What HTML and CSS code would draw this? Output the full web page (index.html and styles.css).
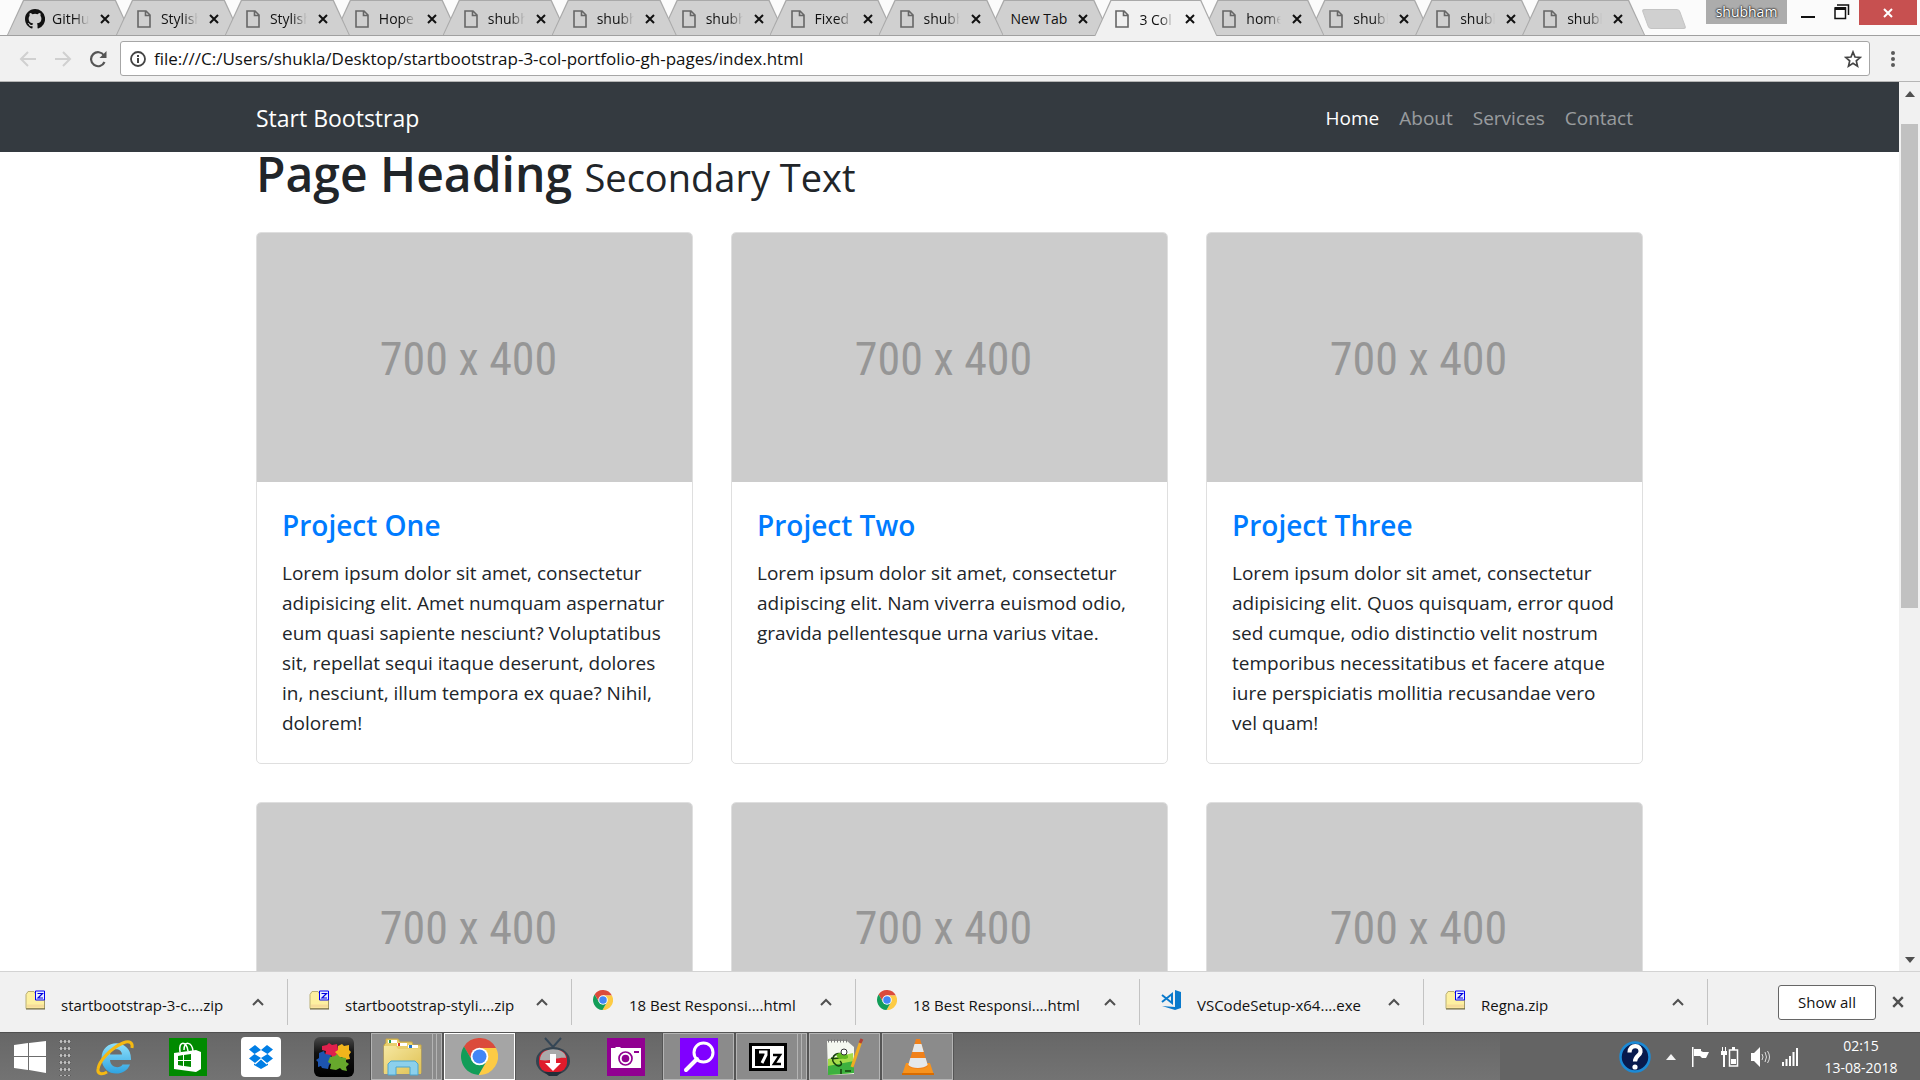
FILE: index.html
```html
<!DOCTYPE html>
<html lang="en">
<head>
<meta charset="utf-8">
<title>3 Col Portfolio</title>
<link rel="stylesheet" href="styles.css">
</head>
<body>
<svg class="sprite" aria-hidden="true">
  <symbol id="file" viewBox="0 0 14 18"><path d="M1 1h8l4 4v12H1zM8.500 1v4.500H13" fill="none" stroke="#666" stroke-width="1.600"/></symbol>
  <symbol id="x" viewBox="0 0 10 10"><path d="M1 1l8 8M9 1l-8 8" fill="none" stroke="currentColor" stroke-width="2"/></symbol>
  <symbol id="chevron" viewBox="0 0 12 8"><path d="M1 7l5-5 5 5" fill="none" stroke="#505050" stroke-width="2"/></symbol>
  <symbol id="zip" viewBox="0 0 20 19"><path d="M1 4l2-3h6l2 3h9v14H1z" fill="#fdf0a0" stroke="#b9ae74"/><path d="M2 14h17v3H2z" fill="#f6dc9a"/><path d="M1 18.500h19V8" fill="none" stroke="#6a6440"/><path d="M10.500 .5h9v9h-9z" fill="#e8eeff" stroke="#0000f0"/><path d="M12.500 3h5l-4.500 4.500h5" fill="none" stroke="#0000e0" stroke-width="1.200"/></symbol>
  <symbol id="chrome" viewBox="2 2 44 44"><path d="M5.540 12.030A22 22 0 0 1 43.600 14H24v10l-8.660 5z" fill="#db4b3c"/><path d="M43.600 14a22 22 0 0 1-20.740 31.970L32.660 29 24 24V14z" fill="#fdcb44"/><path d="M22.860 45.970A22 22 0 0 1 5.540 12.030L15.340 29 24 24l8.660 5z" fill="#129d58"/><circle cx="24" cy="24" r="10.500" fill="#fff"/><circle cx="24" cy="24" r="8.300" fill="#4286f5"/></symbol>
</svg>

<header class="browser">
  <div class="tabstrip">
    <ul class="tabs">
      <li class="tab"><svg class="favicon github" viewBox="0 0 16 16"><path fill="#111" d="M8 0C3.580 0 0 3.580 0 8c0 3.540 2.290 6.530 5.470 7.590.4.070.55-.17.55-.38v-1.490c-2.010.37-2.530-.49-2.690-.94-.09-.23-.48-.94-.82-1.130-.28-.15-.68-.52-.01-.53.63-.01 1.080.58 1.230.82.72 1.210 1.870.87 2.330.66.070-.52.28-.87.51-1.070-1.780-.2-3.640-.89-3.640-3.950 0-.87.310-1.590.82-2.150-.08-.2-.36-1.020.08-2.120 0 0 .67-.21 2.200.82a7.600 7.600 0 0 1 4 0c1.530-1.040 2.200-.82 2.200-.82.44 1.100.16 1.920.08 2.120.51.560.82 1.270.82 2.150 0 3.070-1.870 3.750-3.650 3.950.29.25.54.73.54 1.480v2.200c0 .21.15.46.55.38A8 8 0 0 0 8 0z"/></svg><span class="tab-title">GitHub</span><button class="tab-close" aria-label="Close tab"><svg><use href="#x"/></svg></button></li>
      <li class="tab"><svg class="favicon"><use href="#file"/></svg><span class="tab-title">Stylish</span><button class="tab-close" aria-label="Close tab"><svg><use href="#x"/></svg></button></li>
      <li class="tab"><svg class="favicon"><use href="#file"/></svg><span class="tab-title">Stylish</span><button class="tab-close" aria-label="Close tab"><svg><use href="#x"/></svg></button></li>
      <li class="tab"><svg class="favicon"><use href="#file"/></svg><span class="tab-title">Hope</span><button class="tab-close" aria-label="Close tab"><svg><use href="#x"/></svg></button></li>
      <li class="tab"><svg class="favicon"><use href="#file"/></svg><span class="tab-title">shubham</span><button class="tab-close" aria-label="Close tab"><svg><use href="#x"/></svg></button></li>
      <li class="tab"><svg class="favicon"><use href="#file"/></svg><span class="tab-title">shubham</span><button class="tab-close" aria-label="Close tab"><svg><use href="#x"/></svg></button></li>
      <li class="tab"><svg class="favicon"><use href="#file"/></svg><span class="tab-title">shubham</span><button class="tab-close" aria-label="Close tab"><svg><use href="#x"/></svg></button></li>
      <li class="tab"><svg class="favicon"><use href="#file"/></svg><span class="tab-title">Fixed</span><button class="tab-close" aria-label="Close tab"><svg><use href="#x"/></svg></button></li>
      <li class="tab"><svg class="favicon"><use href="#file"/></svg><span class="tab-title">shubham</span><button class="tab-close" aria-label="Close tab"><svg><use href="#x"/></svg></button></li>
      <li class="tab blank"><span class="tab-title">New Tab</span><button class="tab-close" aria-label="Close tab"><svg><use href="#x"/></svg></button></li>
      <li class="tab active"><svg class="favicon"><use href="#file"/></svg><span class="tab-title">3 Col P</span><button class="tab-close" aria-label="Close tab"><svg><use href="#x"/></svg></button></li>
      <li class="tab"><svg class="favicon"><use href="#file"/></svg><span class="tab-title">home</span><button class="tab-close" aria-label="Close tab"><svg><use href="#x"/></svg></button></li>
      <li class="tab"><svg class="favicon"><use href="#file"/></svg><span class="tab-title">shubham</span><button class="tab-close" aria-label="Close tab"><svg><use href="#x"/></svg></button></li>
      <li class="tab"><svg class="favicon"><use href="#file"/></svg><span class="tab-title">shubham</span><button class="tab-close" aria-label="Close tab"><svg><use href="#x"/></svg></button></li>
      <li class="tab"><svg class="favicon"><use href="#file"/></svg><span class="tab-title">shubham</span><button class="tab-close" aria-label="Close tab"><svg><use href="#x"/></svg></button></li>
    </ul>
    <button class="new-tab" aria-label="New tab"></button>
    <div class="window-controls">
      <button class="profile">shubham</button>
      <button class="win-btn" aria-label="Minimize"><svg width="16" height="20"><path d="M1 17h14" stroke="#111" stroke-width="2"/></svg></button>
      <button class="win-btn" aria-label="Restore"><svg width="16" height="20"><path d="M3 5h11.500v10" fill="none" stroke="#111" stroke-width="1.500"/><path d="M1 8h10.500v10.500H1z" fill="#fff" stroke="#111" stroke-width="1.500"/><path d="M1 8.500h11" stroke="#111" stroke-width="3"/></svg></button>
      <button class="win-close" aria-label="Close"><svg width="10" height="10"><use href="#x"/></svg></button>
    </div>
  </div>
  <div class="toolbar">
    <button class="tool" aria-label="Back"><svg width="18" height="18"><path d="M17 9H2M9 2L2 9l7 7" fill="none" stroke="#d0d0d0" stroke-width="2"/></svg></button>
    <button class="tool" aria-label="Forward"><svg width="18" height="18"><path d="M1 9h15M9 2l7 7-7 7" fill="none" stroke="#d0d0d0" stroke-width="2"/></svg></button>
    <button class="tool" aria-label="Reload"><svg width="18" height="18"><path d="M15.500 12A7 7 0 1 1 15 5.500" fill="none" stroke="#555" stroke-width="2.200"/><path d="M17.500 1v7h-7z" fill="#555"/></svg></button>
    <div class="omnibox">
      <svg width="16" height="16"><circle cx="8" cy="8" r="7" fill="none" stroke="#444" stroke-width="1.800"/><path d="M8 7v5M8 4v2" stroke="#444" stroke-width="2"/></svg>
      <input type="text" aria-label="Address" value="file:///C:/Users/shukla/Desktop/startbootstrap-3-col-portfolio-gh-pages/index.html">
      <button class="star" aria-label="Bookmark"><svg width="18" height="18" viewBox="0 0 18 18"><path d="M9 2l2 5 5.300.4-4 3.500 1.200 5.200L9 13.300l-4.500 2.800 1.200-5.200-4-3.500L7 7z" fill="none" stroke="#444" stroke-width="1.700"/></svg></button>
    </div>
    <button class="menu" aria-label="Menu"><svg width="6" height="18"><g fill="#5a5a5a"><circle cx="3" cy="3" r="2"/><circle cx="3" cy="9" r="2"/><circle cx="3" cy="15" r="2"/></g></svg></button>
  </div>
</header>

<div class="viewport">
  <div class="page">
    <nav class="navbar">
      <div class="container nav-inner">
        <a class="brand" href="#">Start Bootstrap</a>
        <div class="nav-links"><a class="current" href="#">Home</a><a href="#">About</a><a href="#">Services</a><a href="#">Contact</a></div>
      </div>
    </nav>
    <main class="container">
      <h1>Page Heading <small>Secondary Text</small></h1>
      <div class="cards">
        <article class="card"><a class="thumb" href="#">700 x 400</a><div class="card-body"><h4><a href="#">Project One</a></h4><p>Lorem ipsum dolor sit amet, consectetur adipisicing elit. Amet numquam aspernatur eum quasi sapiente nesciunt? Voluptatibus sit, repellat sequi itaque deserunt, dolores in, nesciunt, illum tempora ex quae? Nihil, dolorem!</p></div></article>
        <article class="card"><a class="thumb" href="#">700 x 400</a><div class="card-body"><h4><a href="#">Project Two</a></h4><p>Lorem ipsum dolor sit amet, consectetur adipiscing elit. Nam viverra euismod odio, gravida pellentesque urna varius vitae.</p></div></article>
        <article class="card"><a class="thumb" href="#">700 x 400</a><div class="card-body"><h4><a href="#">Project Three</a></h4><p>Lorem ipsum dolor sit amet, consectetur adipisicing elit. Quos quisquam, error quod sed cumque, odio distinctio velit nostrum temporibus necessitatibus et facere atque iure perspiciatis mollitia recusandae vero vel quam!</p></div></article>
        <article class="card"><a class="thumb" href="#">700 x 400</a></article>
        <article class="card"><a class="thumb" href="#">700 x 400</a></article>
        <article class="card"><a class="thumb" href="#">700 x 400</a></article>
      </div>
    </main>
  </div>
  <div class="scrollbar">
    <svg width="10" height="6"><path d="M0 6l5-6 5 6z" fill="#505050"/></svg>
    <div class="track"><div class="thumb-bar"></div></div>
    <svg width="10" height="6"><path d="M0 0l5 6 5-6z" fill="#505050"/></svg>
  </div>
</div>

<section class="downloads" aria-label="Downloads">
  <div class="download"><svg class="dl-icon"><use href="#zip"/></svg><span>startbootstrap-3-c....zip</span><button aria-label="Options"><svg><use href="#chevron"/></svg></button></div>
  <div class="download"><svg class="dl-icon"><use href="#zip"/></svg><span>startbootstrap-styli....zip</span><button aria-label="Options"><svg><use href="#chevron"/></svg></button></div>
  <div class="download"><svg class="dl-icon"><use href="#chrome"/></svg><span>18 Best Responsi....html</span><button aria-label="Options"><svg><use href="#chevron"/></svg></button></div>
  <div class="download"><svg class="dl-icon"><use href="#chrome"/></svg><span>18 Best Responsi....html</span><button aria-label="Options"><svg><use href="#chevron"/></svg></button></div>
  <div class="download"><svg class="dl-icon" viewBox="0 0 20 20"><path d="M14 0l6 2v16l-6 2-13-4 13 1z" fill="#0a7acc"/><path d="M1 5l10 8V4L1 12" fill="none" stroke="#0a7acc" stroke-width="2"/></svg><span>VSCodeSetup-x64....exe</span><button aria-label="Options"><svg><use href="#chevron"/></svg></button></div>
  <div class="download"><svg class="dl-icon"><use href="#zip"/></svg><span>Regna.zip</span><button aria-label="Options"><svg><use href="#chevron"/></svg></button></div>
  <button class="show-all">Show all</button>
  <button class="dl-close" aria-label="Close downloads"><svg width="12" height="12"><use href="#x"/></svg></button>
</section>

<footer class="taskbar">
  <button class="start" aria-label="Start"><svg width="34" height="34" viewBox="0 0 34 34"><path d="M1 5l14-2v13H1zM16 3l17-2v15H16zM1 17h14v13L1 28zM16 17h17v16l-17-3z" fill="#fff"/></svg></button>
  <span class="grip"></span>
  <button class="task" aria-label="Internet Explorer"><svg width="40" height="40" viewBox="0 0 40 40"><defs><linearGradient id="ieb" x2="0" y2="1"><stop offset="0" stop-color="#8fe0fb"/><stop offset="1" stop-color="#2fa3e0"/></linearGradient></defs><path d="M36 23H15c.5 8 10 9 12.500 4.500H35C30 41 7 40 6.500 21 7 1 37 1 36 23zM15 17.500h12c-.5-7-11-7-12 0z" fill="url(#ieb)"/><path d="M37 11c1-5-2-8-9-5C16 11 4 24 3 32c-1 5 4 6 9 3" fill="none" stroke="#f5b912" stroke-width="3"/></svg></button>
  <button class="task" aria-label="Store"><svg width="38" height="38" viewBox="0 0 38 38"><path d="M0 0h38v38H0z" fill="#008a00"/><path d="M5 15l22-3 5 2v17l-5 3-22-3z" fill="#fff"/><path d="M11 14c-2-12 7-11 8-1M15 12c0-10 8-8 9 1" fill="none" stroke="#fff" stroke-width="1.500"/><path d="M9 18l5-1v5H9zM15 17l7-1v6h-7zM9 23h5v5l-5-1zM15 23h7v6l-7-1z" fill="#008a00"/></svg></button>
  <button class="task" aria-label="Dropbox"><svg width="40" height="40" viewBox="0 0 40 40"><rect width="40" height="40" rx="4" fill="#fff"/><path d="M14 8l6 5-6.500 4L8 12.500zM26 8l-6 5 6.500 4L32 12.500zM8 21.500l5.500-4.500 6.500 4-6 5zM32 21.500L26.500 17 20 21l6 5zM13 26.500l1.500 1 5.500-5 5.500 5 1.500-1V28l-7 4-7-4z" fill="#007ee5"/></svg></button>
  <button class="task" aria-label="Puzzle"><svg width="40" height="40" viewBox="0 0 40 40"><defs><linearGradient id="blk" x2="0" y2="1"><stop offset="0" stop-color="#4a4a4a"/><stop offset=".4" stop-color="#111"/><stop offset="1" stop-color="#000"/></linearGradient></defs><rect width="40" height="40" rx="6" fill="url(#blk)"/><path d="M8 9l5-1 2-2 3 2 5-1 1 5 2 2-3 2v4h-5l-1-2-3 2-3-2 1-4-4-1z" fill="#e0204c"/><path d="M24 9l4-2 2 2 5-1v5l2 2-2 3 1 4-6 1-2-3-4 1-1-4-2-2 3-2z" fill="#f2b51c"/><path d="M5 16l5-2 1 3 6 1-1 5 2 2-3 3-1 4-6-1-1-2-3 1v-5l-2-2 3-2z" fill="#1d55b0"/><path d="M16 20l5-1 2-2 3 3 6 1v4l3 2-3 3 1 4-5-1-2-2-4 2-6-1 1-5-3-2z" fill="#67a82c"/></svg></button>
  <button class="task open stacked" aria-label="File Explorer"><svg width="40" height="40" viewBox="0 0 40 40"><defs><linearGradient id="fol" x2="1" y2="1"><stop offset="0" stop-color="#f5e7a0"/><stop offset="1" stop-color="#e0c153"/></linearGradient></defs><path d="M3 6V2h12l2 3h12l1 3h8v28H1V8z" fill="#e9cf6d" stroke="#c9a945"/><path d="M5 3h9v3H5zM14 6h10v3H14zM25 8h10v3H25z" fill="#fff"/><path d="M6 3h2v3H6z" fill="#1a9b50"/><path d="M15 6h2v3h-2z" fill="#d32"/><path d="M26 8h3v3h-3z" fill="#27c"/><path d="M1 9h12l2 3h23v25H1z" fill="url(#fol)"/><path d="M5 38V27l3-3h24l3 3v11h-8v-8H13v8z" fill="#8cd0ec" stroke="#4ba5cf"/></svg></button>
  <button class="task open selected" aria-label="Chrome"><svg width="37" height="37"><use href="#chrome"/></svg></button>
  <button class="task" aria-label="Downloader"><svg width="36" height="40" viewBox="0 0 36 40"><path d="M10 1l8 9 8-9" fill="none" stroke="#344656" stroke-width="2"/><ellipse cx="18" cy="24" rx="17" ry="14" fill="#34434f"/><path d="M9 35l5 4h8l5-4z" fill="#222f3a"/><rect x="4" y="13" width="28" height="22" rx="9" fill="#e01b2b"/><path d="M5 23c0-15 26-13 26-2-9-1-15 4-26 2z" fill="#aaa"/><path d="M15 17h6v9h5l-8 8-8-8h5z" fill="#fff"/></svg></button>
  <button class="task" aria-label="Camera"><svg width="38" height="38" viewBox="0 0 38 38"><path d="M0 0h38v38H0z" fill="#910091"/><path d="M4 10h4l1-1h4l1 1h20v20H4z" fill="#fff"/><circle cx="18.500" cy="20.500" r="6.500" fill="none" stroke="#910091" stroke-width="1.700"/><circle cx="18.500" cy="20.500" r="3.800" fill="#910091"/><path d="M27 13h5v2h-5z" fill="#910091"/></svg></button>
  <button class="task open" aria-label="Search"><svg width="38" height="38" viewBox="0 0 38 38"><path d="M0 0h38v38H0z" fill="#8000ff"/><circle cx="23.500" cy="14.500" r="9.500" fill="none" stroke="#fff" stroke-width="3"/><path d="M17 21L6 32" stroke="#fff" stroke-width="4" stroke-linecap="round"/></svg></button>
  <button class="task open stacked" aria-label="7-Zip"><svg width="38" height="28" viewBox="0 0 38 28"><path d="M1.500 1.500h35v25h-35z" fill="#fff" stroke="#000" stroke-width="3"/><path d="M6 6h15v17H6z"/><path d="M10 9h7v3l-4 8" fill="none" stroke="#fff" stroke-width="3"/><path d="M24 12h7L25 21h7" fill="none" stroke="#000" stroke-width="2.500"/></svg></button>
  <button class="task open" aria-label="Notepad++"><svg width="38" height="38" viewBox="0 0 38 38"><path d="M1 3h20l7 6v27L2 37z" fill="#f4f7f0"/><path d="M2 3h19" stroke="#777" stroke-width="3" stroke-dasharray="1 2"/><path d="M2 21l25-6 1 20L2 37z" fill="#a5dc4a"/><path d="M2 28l26-5v12L2 37z" fill="#3db13f"/><path d="M20 20C13 10 3 19 8 25s10 1 6-2M19 19c-5 0-9 3-14 1M15 31v5M19 33h6" fill="none" stroke="#163f0c" stroke-width="1.500"/><path d="M10 17c5-5 13-2 12 3-3 2-6 0-9 1z" fill="#62b91d"/><circle cx="18" cy="14" r="3" fill="#fff" stroke="#333"/><path d="M26 29l9-26" stroke="#f0ad22" stroke-width="3"/><path d="M34 5l2-4" stroke="#b04035" stroke-width="3"/></svg></button>
  <button class="task open" aria-label="VLC"><svg width="34" height="38" viewBox="0 0 34 38"><path d="M5 25h24l4 12H1z" fill="#f7931e"/><path d="M1 35h32v2H1z" fill="#d96c00"/><path d="M15 1h4l8 27c-4 4-16 4-20 0z" fill="#f1811a"/><path d="M13.500 6h7l2.300 8H11.200zM9.300 20h15.400l2 7c-4 4-16 4-19.400 0z" fill="#e5e8ea"/></svg></button>
  <div class="tray">
    <svg class="help" width="32" height="32" viewBox="0 0 32 32"><circle cx="16" cy="16" r="14.500" fill="#081a4d" stroke="#1b8ad6" stroke-width="2.500"/><path d="M10.500 11.500c0-9 12-8 11-.5-.5 3.500-5.500 4-5.500 9.500" fill="none" stroke="#fff" stroke-width="4.200"/><circle cx="16" cy="26" r="2.600" fill="#fff"/></svg>
    <svg class="more" width="10" height="6"><path d="M0 6l5-6 5 6z" fill="#f4f4f4"/></svg>
    <svg width="18" height="20" viewBox="0 0 18 20"><path d="M1 0h1.500v20H1zM3 2h7v2l2 1h6l-3 6h-4l-2-2H3z" fill="#fff"/></svg>
    <svg width="18" height="20" viewBox="0 0 18 20"><path d="M8.500 3h8v16h-8z" fill="none" stroke="#fff" stroke-width="1.500"/><path d="M11 0h3v3h-3zM10 12h5v5h-5zM0 4h6v4H4v12H2V8H0zM1 0h1v4H1zM4 0h1v4H4z" fill="#fff"/></svg>
    <svg width="19" height="20" viewBox="0 0 19 20"><path d="M0 6h3l6-6v20l-6-6H0z" fill="#fff"/><path d="M11 7q2 3 0 6M14 5q3 5 0 10M16.500 4q4 6 0 12" fill="none" stroke="#ddd"/></svg>
    <svg width="16" height="18" viewBox="0 0 16 18"><path d="M0 14h2v4H0zM3.500 11h2v7h-2zM7 8h2v10H7zM10.500 4h2v14h-2zM14 0h2v18h-2z" fill="#fff"/></svg>
    <time class="clock"><span>02:15</span><span>13-08-2018</span></time>
  </div>
</footer>
</body>
</html>
```
FILE: styles.css
```css
* { box-sizing: border-box; }
body {
  margin: 0;
  height: 100vh;
  display: flex;
  flex-direction: column;
  overflow: hidden;
  background: #fff;
  color: #212529;
  font-family: "Open Sans", "Noto Sans", sans-serif;
}
button { border: 0; padding: 0; background: none; font: inherit; color: inherit; }
a { text-decoration: none; color: inherit; }
svg { display: block; flex: none; }
.sprite { position: absolute; width: 0; height: 0; }

/* Tab strip */
.tabstrip {
  display: flex;
  height: 36px;
  padding-left: 7px;
  background: #fbfbfb;
  border-bottom: 1px solid #a0a0a0;
}
.tabs {
  flex: 0 1 1638px;
  min-width: 0;
  display: flex;
  margin: 0;
  padding: 0 16px 0 0;
  list-style: none;
}
.tab {
  position: relative;
  flex: 0 1 123px;
  min-width: 0;
  height: 35px;
  margin-right: -16px;
  padding: 2px 22px 0 18px;
  display: flex;
  align-items: center;
  gap: 7px;
  z-index: 1;
  color: #111;
  font-size: 14px;
}
.tab::before, .tab::after {
  content: "";
  position: absolute;
  inset: 0;
  z-index: -1;
  background: #a9a9a9;
  clip-path: polygon(0 100%, 16px 0, calc(100% - 16px) 0, 100% 100%);
}
.tab::after {
  background: #d0d0d0;
  clip-path: polygon(1px 100%, 17px 1px, calc(100% - 17px) 1px, calc(100% - 1px) 100%);
}
.tab:nth-child(-n+12) { z-index: 2; }
.tab:nth-child(-n+9) { z-index: 3; flex-basis: 125px; }
.tab:nth-child(-n+6) { z-index: 4; }
.tab:nth-child(-n+3) { z-index: 5; }
.tab.active { z-index: 6; height: 36px; }
.tab.active::after { background: #f1f1f1; }
.favicon { width: 20px; height: 18px; }
.favicon.github { height: 20px; }
.tab-title {
  flex: 1;
  min-width: 0;
  margin-right: 4px;
  overflow: hidden;
  white-space: nowrap;
  -webkit-mask-image: linear-gradient(90deg, #000 60%, transparent);
  mask-image: linear-gradient(90deg, #000 60%, transparent);
}
.tab.blank { padding-left: 23px; }
.tab.blank .tab-title { margin-right: 0; -webkit-mask-image: none; mask-image: none; }
.tab-close svg { width: 10px; height: 10px; }
.new-tab {
  width: 38px;
  height: 20px;
  margin: 9px 0 0 0;
  transform: skewX(20deg);
  background: #d0d0d0;
  border: 1px solid #c4c4c4;
  border-radius: 3px;
}
.window-controls { display: flex; align-items: flex-start; margin-left: auto; padding-right: 3px; }
.profile {
  width: 81px;
  height: 24px;
  margin-right: 13px;
  background: #acacac;
  color: #fff;
  font-size: 14px;
  line-height: 20px;
  text-shadow: 0 0 2px #000, 0 0 2px #000;
}
.win-btn { margin-right: 18px; }
.win-close {
  width: 58px;
  height: 25px;
  margin-left: -9px;
  display: grid;
  place-items: center;
  background: #c75050;
  color: #fff;
}

/* Toolbar */
.toolbar {
  display: flex;
  align-items: center;
  height: 46px;
  padding: 0 24px 0 19px;
  gap: 17px;
  background: #f1f1f1;
  border-bottom: 1px solid #b5b5b5;
}
.omnibox {
  flex: 1;
  display: flex;
  align-items: center;
  height: 35px;
  margin-left: -4px;
  padding: 0 7px 0 9px;
  gap: 8px;
  background: #fff;
  border: 1px solid #a6a6a6;
  border-radius: 3px;
}
.omnibox input {
  flex: 1;
  min-width: 0;
  padding: 0;
  border: 0;
  outline: 0;
  background: none;
  color: #111;
  font: 17px "Open Sans", "Noto Sans", sans-serif;
}
.menu { margin-left: 3px; }

/* Page */
.viewport { flex: 1; min-height: 0; display: flex; }
.page { flex: 1; overflow: hidden; }
.container { width: 100%; max-width: 1387px; margin: 0 auto; }
.navbar { background: #343a40; }
.nav-inner { display: flex; align-items: center; justify-content: space-between; height: 70px; padding-top: 2px; }
.brand { color: #fff; font-size: 23px; }
.nav-links { display: flex; gap: 20px; padding-right: 10px; font-size: 19px; color: rgba(255, 255, 255, .5); }
.nav-links .current { color: #fff; }
h1 { margin: 0 0 36px; font-size: 48px; line-height: 44px; font-weight: 600; }
h1 small { font-size: 38px; line-height: 30px; font-weight: 400; }
.cards { display: grid; grid-template-columns: repeat(3, 1fr); gap: 38px; }
.card { border: 1px solid #dfdfdf; border-radius: 5px; overflow: hidden; }
.thumb {
  display: flex;
  align-items: center;
  justify-content: center;
  aspect-ratio: 7 / 4;
  padding: 3px 12px 0 0;
  background: #ccc;
  color: #969696;
  font: 46px "Liberation Sans Narrow", "Roboto Condensed", Roboto, sans-serif;
}
.card-body { padding: 25px; }
h4 { margin: 0 0 15px; font-size: 28px; line-height: 36px; font-weight: 600; color: #007bff; }
p { margin: 0; font-size: 19px; line-height: 30px; }

.scrollbar {
  width: 21px;
  display: flex;
  flex-direction: column;
  align-items: center;
  gap: 27px;
  padding: 9px 0 8px;
  background: #f1f1f1;
}
.track { flex: 1; align-self: stretch; padding: 0 2px; }
.thumb-bar { height: 60%; background: #c1c1c1; }

/* Downloads */
.downloads {
  display: flex;
  align-items: center;
  height: 61px;
  padding: 0 16px 0 4px;
  background: #f1f1f1;
  border-top: 1px solid #d3d3d3;
  color: #111;
  font-size: 15px;
}
.download {
  flex: 0 1 284px;
  display: flex;
  align-items: center;
  height: 46px;
  padding: 0 23px 0 21px;
  gap: 16px;
  border-right: 1px solid #c3c3c3;
}
.download span { flex: 1; padding-top: 6px; white-space: nowrap; }
.dl-icon { width: 20px; height: 20px; margin-bottom: 4px; }
.download button svg { width: 12px; height: 8px; }
.show-all {
  width: 98px;
  height: 35px;
  margin: 0 16px 0 auto;
  background: #fff;
  border: 1px solid #666;
  border-radius: 3px;
}
.dl-close { color: #505050; }

/* Taskbar */
.taskbar {
  display: flex;
  align-items: center;
  height: 48px;
  background: linear-gradient(#676767, #737373);
  border-top: 1px solid #505050;
  color: #fff;
}
.start { margin: 0 12px 0 13px; }
.grip {
  width: 12px;
  height: 38px;
  margin-right: 8px;
  background: radial-gradient(circle, #c2c2c2 1px, #444 2px, transparent 2px) 0 0 / 4px 7px;
}
.task { width: 71px; height: 47px; margin-right: 2px; display: grid; place-items: center; }
.open { border: 1px solid #b4b4b4; background: #8b8b8b; outline: 1px solid #555; outline-offset: 0; }
.stacked { padding-right: 8px; box-shadow: inset -4px 0 #8b8b8b, inset -5px 0 #b4b4b4, inset -8px 0 #8b8b8b, inset -9px 0 #b4b4b4; }
.selected { background: #a5a5a5; border-color: #fff; }
.tray {
  display: flex;
  align-items: center;
  align-self: stretch;
  width: 420px;
  margin-left: auto;
  padding-right: 20px;
  gap: 12px;
  justify-content: flex-end;
  background: #646464;
}
.more { margin: 0 3px; }
.clock { width: 78px; margin-left: 12px; text-align: center; font-size: 14px; line-height: 22px; }
.clock span { display: block; }
```
